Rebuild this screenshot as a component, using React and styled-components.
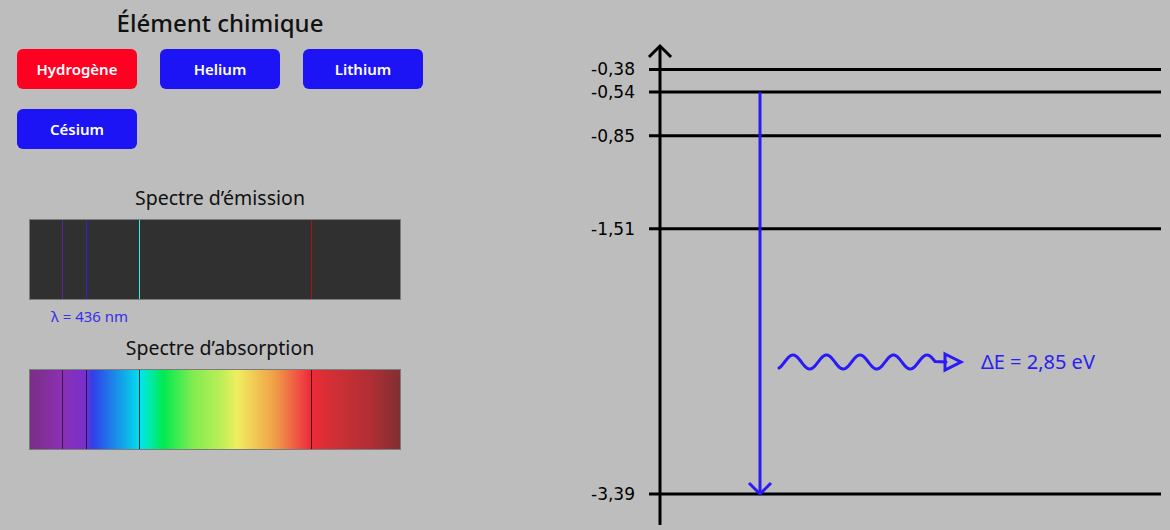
import React from "react"
import styled, { createGlobalStyle } from "styled-components"

const GlobalStyle = createGlobalStyle`
  html, body {
    margin: 0;
    padding: 0;
    background: #bdbdbd;
  }
  body {
    font-family: "Noto Sans", "Open Sans", sans-serif;
  }
`

const Page = styled.div`
  width: 1170px;
  height: 530px;
  display: flex;
  background: #bdbdbd;
  overflow: hidden;
`

const LeftPanel = styled.div`
  width: 440px;
  flex-shrink: 0;
  display: flex;
  flex-direction: column;
`

const Heading = styled.h1`
  margin: 8px 0 0;
  height: 30px;
  text-align: center;
  font-size: 24px;
  font-weight: 500;
  line-height: 30px;
  color: #111;
`

const ButtonGrid = styled.div`
  display: grid;
  grid-template-columns: repeat(3, 120px);
  column-gap: 23px;
  row-gap: 20px;
  margin: 11px 0 0 17px;
`

const ElementButton = styled.button`
  height: 40px;
  border: none;
  border-radius: 6px;
  background: ${(props) => (props.$active ? "#ff0020" : "#1c14f5")};
  color: #fff;
  font-family: inherit;
  font-size: 15px;
  font-weight: 600;
  cursor: pointer;
`

const SpectrumTitle = styled.div`
  text-align: center;
  font-size: 19.5px;
  line-height: 24px;
  color: #111;
  margin-top: ${(props) => props.$top}px;
`

const SpectrumBar = styled.div`
  position: relative;
  width: 370px;
  height: 79px;
  margin: ${(props) => props.$gap}px 0 0 29px;
  border: 1px solid #7c7c7c;
  background: ${(props) =>
    props.$absorption
      ? `linear-gradient(to right,
        #7a2e86 0%,
        #8a30b0 8%,
        #7a30cc 15%,
        #3040ea 17%,
        #10b0e8 26%,
        #00e4f0 30%,
        #00e8d0 31%,
        #00ea50 36%,
        #80ec50 44%,
        #c0ee58 52%,
        #f0ee60 56%,
        #f0a048 66%,
        #f04040 74%,
        #ee2a36 76%,
        #d03036 82%,
        #b02e34 92%,
        #803034 100%)`
      : "#303030"};
`

const SpectralLine = styled.span`
  position: absolute;
  top: 0;
  bottom: 0;
  width: 1px;
  background: ${(props) => props.$color};
`

const WavelengthLabel = styled.div`
  height: 20px;
  margin-top: 6px;
  font-size: 15px;
  line-height: 20px;
  color: #3a2ee8;
  white-space: nowrap;
`

const DiagramPanel = styled.div`
  flex: 1;
`

const Diagram = styled.svg`
  display: block;
`

const LevelLabel = styled.text`
  font-family: "DejaVu Sans", sans-serif;
  font-size: 17px;
  fill: #000;
`

const PhotonLabel = styled.text`
  font-family: "Noto Sans", "Open Sans", sans-serif;
  font-size: 20px;
  fill: #2a1ff0;
`

// spectrum bar covers roughly 378 → 744 nm
const nmToX = (nm) => Math.round((nm - 378.4) * 1.012)

const lines = [
  { nm: 410, emit: "#6020a0", absorb: "#3a1a50" },
  { nm: 434, emit: "#3020e0", absorb: "#1a1060" },
  { nm: 486, emit: "#30f0f0", absorb: "#102020" },
  { nm: 656, emit: "#b01010", absorb: "#401010" },
]

const levels = [-0.38, -0.54, -0.85, -1.51, -3.39]

// diagram drawn with origin at x = 440 of the page
const OX = 440
const levelY = (e) => 92 + (-0.54 - e) * 141.05

const wavePoints = () => {
  const pts = []
  for (let x = 779; x <= 935; x += 1) {
    const y = 362 - 7 * Math.sin((2 * Math.PI * (x - 784.6)) / 33.5)
    pts.push(`${x - OX},${y.toFixed(2)}`)
  }
  pts.push(`${946 - OX},362`)
  return pts.join(" ")
}

const formatLevel = (e) => e.toFixed(2).replace(".", ",")

const App = () => {
  const selected = 434
  return (
    <Page>
      <GlobalStyle />
      <LeftPanel>
        <Heading>Élément chimique</Heading>
        <ButtonGrid>
          <ElementButton $active>Hydrogène</ElementButton>
          <ElementButton>Helium</ElementButton>
          <ElementButton>Lithium</ElementButton>
          <ElementButton>Césium</ElementButton>
        </ButtonGrid>

        <SpectrumTitle $top={37}>Spectre d’émission</SpectrumTitle>
        <SpectrumBar $gap={9}>
          {lines.map((l) => (
            <SpectralLine key={l.nm} $color={l.emit} style={{ left: nmToX(l.nm) }} />
          ))}
        </SpectrumBar>
        <WavelengthLabel style={{ marginLeft: 30 + nmToX(selected) - 35 }}>
          λ = 436 nm
        </WavelengthLabel>

        <SpectrumTitle $top={10}>Spectre d’absorption</SpectrumTitle>
        <SpectrumBar $gap={9} $absorption>
          {lines.map((l) => (
            <SpectralLine key={l.nm} $color={l.absorb} style={{ left: nmToX(l.nm) }} />
          ))}
        </SpectrumBar>
      </LeftPanel>

      <DiagramPanel>
        <Diagram width="730" height="530" viewBox="0 0 730 530">
          <g stroke="#000" strokeWidth="3" fill="none">
            <line x1={660 - OX} y1="46" x2={660 - OX} y2="525" />
            <polyline
              points={`${650 - OX},56 ${660 - OX},46 ${670 - OX},56`}
              strokeLinecap="square"
            />
            {levels.map((e) => (
              <line key={e} x1={649 - OX} y1={levelY(e)} x2={1161 - OX} y2={levelY(e)} />
            ))}
          </g>
          {levels.map((e) => (
            <LevelLabel key={e} x={635 - OX} y={levelY(e) + 6} textAnchor="end">
              {formatLevel(e)}
            </LevelLabel>
          ))}

          <g stroke="#2a1af5" strokeWidth="3" fill="none">
            <line x1={760 - OX} y1="92" x2={760 - OX} y2="493" />
            <polyline points={`${749 - OX},483 ${760 - OX},494 ${771 - OX},483`} />
            <polyline points={wavePoints()} strokeLinecap="round" strokeLinejoin="round" />
            <polygon points={`${945 - OX},354 ${961 - OX},362 ${945 - OX},370`} />
          </g>
          <PhotonLabel x={981 - OX} y="369">ΔE = 2,85 eV</PhotonLabel>
        </Diagram>
      </DiagramPanel>
    </Page>
  )
}

export default App
